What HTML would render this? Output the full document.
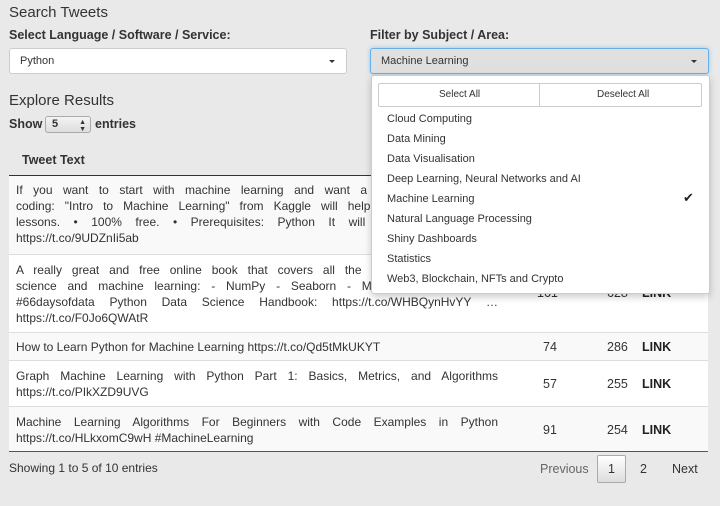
<!DOCTYPE html>
<html><head><style>
body{margin:0;width:720px;height:506px;background:#e9e9e9;font-family:"Liberation Sans",sans-serif;color:#333;position:relative;overflow:hidden;font-size:12px}
.a{position:absolute}
h1{position:absolute;margin:0;font-weight:normal;font-size:15px;color:#333}
.lbl{font-weight:bold;font-size:12.5px}
.sel{background:#fff;border:1px solid #ccc;border-radius:3px;height:26px;box-sizing:border-box;font-size:11px;line-height:24px;padding-left:10px}
.caret{position:absolute;right:11px;top:11px;border-left:3px solid transparent;border-right:3px solid transparent;border-top:3px solid #333}
.row{position:absolute;left:9px;width:699px;border-top:1px solid #ddd}
.txt{position:absolute;left:7px;width:482px;font-size:12px;line-height:16px;color:#333}
.txt div{text-align:justify;text-align-last:justify;white-space:nowrap;overflow:hidden;height:16px}
.txt div.l{text-align-last:left}
.n{position:absolute;font-size:12.5px}
.lk{position:absolute;left:633px;font-weight:bold;font-size:12.5px;color:#222}
.dd{position:absolute;left:371px;top:75px;width:337px;height:217px;background:#fff;border:1px solid #ccc;border-radius:3px;box-shadow:0 3px 8px rgba(0,0,0,.2)}
.it{position:absolute;left:15px;font-size:11px;color:#333}
</style></head><body>
<h1 style="left:9px;top:4px">Search Tweets</h1>
<div class="a lbl" style="left:9px;top:28px">Select Language / Software / Service:</div>
<div class="a sel" style="left:9px;top:48px;width:338px">Python<span class="caret"></span></div>
<div class="a lbl" style="left:370px;top:28px">Filter by Subject / Area:</div>
<div class="a sel" style="left:370px;top:48px;width:339px;background:#e0e0e0;border:1px solid #66afe9;box-shadow:0 0 4px rgba(102,175,233,.6)">Machine Learning<span class="caret"></span></div>
<h1 style="left:9px;top:92px">Explore Results</h1>
<div class="a lbl" style="left:9px;top:117px">Show</div>
<div class="a" style="left:45px;top:116px;width:46px;height:17px;box-sizing:border-box;border:1px solid #aaa;border-radius:3px;background:linear-gradient(#f4f4f4,#ddd);font-size:11px;font-weight:bold;padding-left:6px;line-height:15px">5<span style="position:absolute;right:4px;top:-2px;font-size:7px">&#x25B2;</span><span style="position:absolute;right:4px;top:5px;font-size:7px">&#x25BC;</span></div>
<div class="a lbl" style="left:95px;top:117px">entries</div>
<div class="a lbl" style="left:22px;top:153px">Tweet Text</div>
<div class="a" style="left:9px;top:175px;width:699px;height:1px;background:#333"></div>

<div class="row" style="top:176px;height:78px;background:#f9f9f9;border-top:none">
<div class="txt" style="top:6px"><div>If you want to start with machine learning and want a hands-on tutorial on</div><div>coding: "Intro to Machine Learning" from Kaggle will help you build your first</div><div>lessons. • 100% free. • Prerequisites: Python It will take you 3 hours</div><div class="l">https://t.co/9UDZnIi5ab</div></div></div>
<div class="row" style="top:254px;height:77px;background:#fff">
<div class="txt" style="top:7px"><div>A really great and free online book that covers all the basic tools that data</div><div>science and machine learning: - NumPy - Seaborn - Matplotlib - Scikit-learn</div><div>#66daysofdata Python Data Science Handbook: https://t.co/WHBQynHvYY …</div><div class="l">https://t.co/F0Jo6QWAtR</div></div>
<div class="n" style="left:528px;top:31px">161</div><div class="n" style="left:598px;top:31px">628</div><div class="lk" style="top:31px">LINK</div></div>
<div class="row" style="top:332px;height:28px;background:#f9f9f9">
<div class="txt" style="top:6px"><div class="l">How to Learn Python for Machine Learning https://t.co/Qd5tMkUKYT</div></div>
<div class="n" style="left:534px;top:7px">74</div><div class="n" style="left:598px;top:7px">286</div><div class="lk" style="top:7px">LINK</div></div>
<div class="row" style="top:360px;height:45px;background:#fff">
<div class="txt" style="top:7px"><div>Graph Machine Learning with Python Part 1: Basics, Metrics, and Algorithms</div><div class="l">https://t.co/PIkXZD9UVG</div></div>
<div class="n" style="left:534px;top:16px">57</div><div class="n" style="left:598px;top:16px">255</div><div class="lk" style="top:16px">LINK</div></div>
<div class="row" style="top:406px;height:45px;background:#f9f9f9">
<div class="txt" style="top:7px"><div>Machine Learning Algorithms For Beginners with Code Examples in Python</div><div class="l">https://t.co/HLkxomC9wH #MachineLearning</div></div>
<div class="n" style="left:534px;top:16px">91</div><div class="n" style="left:598px;top:16px">254</div><div class="lk" style="top:16px">LINK</div></div>
<div class="a" style="left:9px;top:451px;width:699px;height:1px;background:#555"></div>

<div class="a" style="left:9px;top:461px;font-size:12px">Showing 1 to 5 of 10 entries</div>
<div class="a" style="left:540px;top:462px;font-size:12.5px;color:#666">Previous</div>
<div class="a" style="left:597px;top:455px;width:29px;height:28px;box-sizing:border-box;border:1px solid #aaa;border-radius:2px;background:linear-gradient(#fff,#ddd);text-align:center;line-height:26px;font-size:12.5px">1</div>
<div class="a" style="left:640px;top:462px;font-size:12.5px">2</div>
<div class="a" style="left:672px;top:462px;font-size:12.5px">Next</div>

<div class="dd">
<div class="a" style="left:6px;top:7px;width:322px;height:22px;border:1px solid #ccc;border-radius:2px;background:#fff"></div>
<div class="a" style="left:167px;top:8px;width:1px;height:22px;background:#ccc"></div>
<div class="a" style="left:67px;top:13px;font-size:10px">Select All</div>
<div class="a" style="left:225px;top:13px;font-size:10px">Deselect All</div>
<div class="it" style="top:37px">Cloud Computing</div>
<div class="it" style="top:57px">Data Mining</div>
<div class="it" style="top:77px">Data Visualisation</div>
<div class="it" style="top:97px">Deep Learning, Neural Networks and AI</div>
<div class="it" style="top:117px">Machine Learning</div>
<div class="a" style="left:311px;top:114px;font-size:13px;color:#222">&#x2714;</div>
<div class="it" style="top:137px">Natural Language Processing</div>
<div class="it" style="top:157px">Shiny Dashboards</div>
<div class="it" style="top:177px">Statistics</div>
<div class="it" style="top:197px">Web3, Blockchain, NFTs and Crypto</div>
</div>
</body></html>
